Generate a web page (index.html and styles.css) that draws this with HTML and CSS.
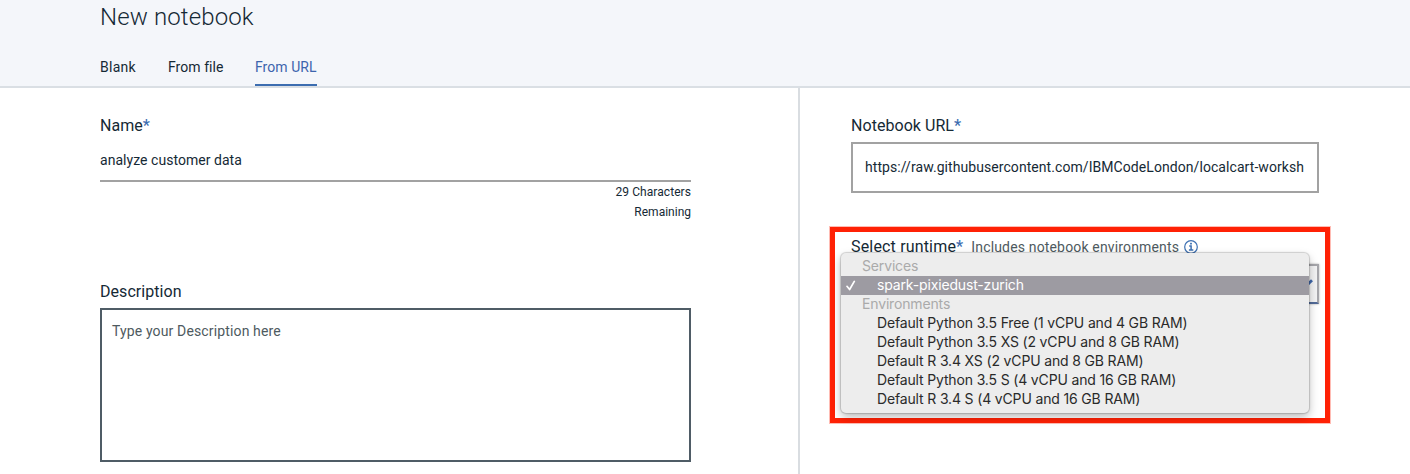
FILE: index.html
```html
<!DOCTYPE html>
<html lang="en">
<head>
<meta charset="utf-8">
<title>New notebook</title>
<link rel="stylesheet" href="styles.css">
</head>
<body>
<header class="header">
  <h1 class="title"><span>New notebook</span></h1>
  <nav class="tabs">
    <a class="tab tab-blank">Blank</a>
    <a class="tab tab-file">From file</a>
    <a class="tab tab-active">From URL</a>
  </nav>
</header>
<main class="content">
  <section class="left">
    <label class="label">Name<span class="star">*</span></label>
    <div class="name-input"><span>analyze customer data</span></div>
    <div class="counter"><span class="count-a">29 Characters</span><span>Remaining</span></div>
    <label class="label">Description</label>
    <div class="textarea"><span>Type your Description here</span></div>
  </section>
  <section class="right">
    <label class="label">Notebook URL<span class="star">*</span></label>
    <div class="url-input"><span>https://raw.githubusercontent.com/IBMCodeLondon/localcart-worksh</span></div>
    <div class="runtime">
      <div class="runtime-label">
        <label class="label label-runtime">Select runtime<span class="star">*</span></label>
        <span class="hint">Includes notebook environments</span>
        <svg class="info" width="14" height="14" viewBox="0 0 14 14" fill="none" stroke="#3d70b2">
          <circle cx="7" cy="7" r="6.3" stroke-width="1.2"/>
          <path d="M5.2 6H7.1V10M4.9 10.1H9.3" stroke-width="1.5"/>
          <rect x="6.1" y="2.8" width="1.8" height="1.7" fill="#3d70b2" stroke="none"/>
        </svg>
      </div>
      <div class="select">
        <svg width="12" height="8" viewBox="0 0 12 8" fill="none" stroke="#3f68ab" stroke-width="2.8"><path d="M1 1.2L6 6L11 1.2"/></svg>
      </div>
      <div class="menu">
        <div class="group">Services</div>
        <div class="option selected">
          <svg class="check" width="10" height="11" viewBox="0 0 10 11" fill="none" stroke="#fff" stroke-width="1.7" stroke-linecap="round" stroke-linejoin="round"><path d="M1 6.3L3.6 9.5L8.3 1.4"/></svg>
          <span>spark-pixiedust-zurich</span>
        </div>
        <div class="group">Environments</div>
        <div class="option"><span>Default Python 3.5 Free (1 vCPU and 4 GB RAM)</span></div>
        <div class="option"><span>Default Python 3.5 XS (2 vCPU and 8 GB RAM)</span></div>
        <div class="option"><span>Default R 3.4 XS (2 vCPU and 8 GB RAM)</span></div>
        <div class="option"><span>Default Python 3.5 S (4 vCPU and 16 GB RAM)</span></div>
        <div class="option"><span>Default R 3.4 S (4 vCPU and 16 GB RAM)</span></div>
      </div>
    </div>
  </section>
</main>
</body>
</html>
```
FILE: styles.css
```css
* { box-sizing: border-box; }
body {
  margin: 0;
  width: 1410px;
  height: 474px;
  overflow: hidden;
  background: #fff;
  color: #152935;
  font: 14px/20px Roboto, "Liberation Sans", sans-serif;
  white-space: nowrap;
}
.header {
  height: 88px;
  padding-left: 100px;
  background: #f4f6fa;
  border-bottom: 2px solid #dadfe4;
}
.title { margin: 0; height: 57px; padding-top: 1px; font-size: 24px; line-height: 32px; font-weight: 300; letter-spacing: .13px; }
.tabs { display: flex; height: 29px; }
.tab { height: 29px; letter-spacing: .05px; }
.tab-blank { width: 68px; letter-spacing: .25px; }
.tab-file { width: 87px; }
.tab-active { width: 62px; color: #3c64ad; border-bottom: 2px solid #3c6db0; }
.content { display: flex; height: 386px; }
.left { width: 800px; padding: 28px 107px 0 100px; border-right: 2px solid #d9dde1; }
.label { display: block; height: 20px; font-size: 16px; letter-spacing: .05px; }
.star { color: #3c6db0; font-weight: 500; }
.name-input { height: 46px; padding-top: 14px; border-bottom: 2px solid #a2a2a2; letter-spacing: .04px; }
.counter { display: flex; flex-direction: column; align-items: flex-end; height: 100px; font-size: 12px; }
.count-a { letter-spacing: .07px; }
.textarea { margin-top: 6px; height: 154px; padding: 11px 10px; border: 2px solid #4f5c66; color: #4e5a60; letter-spacing: .14px; }
.right { width: 610px; padding: 28px 91px 0 51px; }
.url-input { margin-top: 6px; height: 51px; padding: 13px 12px; border: 2px solid #a2a2a2; overflow: hidden; letter-spacing: .068px; }
.runtime { position: relative; width: 500px; height: 196px; margin: 34px 0 0 -21px; border: 5px solid #ff2105; box-shadow: 0 0 0 1px rgba(255,33,5,.3); }
.runtime-label { display: flex; padding: 5px 0 0 16px; }
.label-runtime { letter-spacing: .17px; }
.hint { margin-left: 8px; color: #4e5a60; letter-spacing: .16px; }
.info { margin: 3px 0 0 5px; }
.select { display: flex; justify-content: flex-end; width: 468px; height: 40px; margin: 7px 0 0 16px; padding: 13px 4px 0 0; background: #f3f3f4; border: 2px solid #a6a6ab; border-bottom-color: #526b98; box-shadow: 0 0 2px #aaa; }
.menu {
  position: absolute;
  left: 6px;
  top: 21px;
  width: 468px;
  height: 160px;
  padding-top: 4px;
  border-radius: 5px;
  background: #ededed;
  box-shadow: 0 0 1px 1px rgba(0,0,0,.16), 0 4px 10px rgba(0,0,0,.27);
  color: #2a2a2a;
  font: 14px/17px Inter, "Liberation Sans", sans-serif;
  letter-spacing: -.155px;
}
.group { height: 19px; padding-left: 21px; color: #aaa; }
.option { position: relative; height: 19px; padding-left: 36px; }
.selected { background: #9d9ba2; color: #fff; }
.check { position: absolute; left: 5px; top: 4px; }
```
